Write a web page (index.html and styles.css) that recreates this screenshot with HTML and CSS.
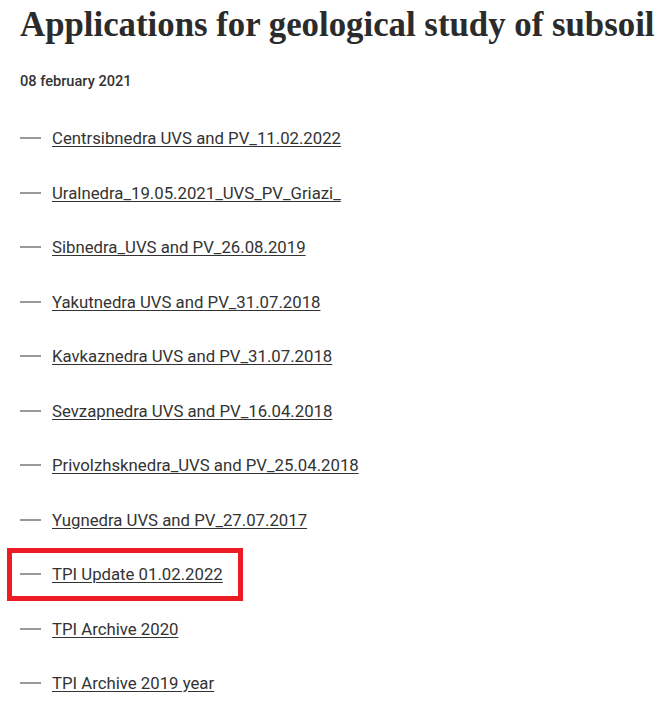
FILE: index.html
```html
<!DOCTYPE html>
<html lang="en">
<head>
<meta charset="utf-8">
<title>Applications for geological study of subsoil</title>
<link rel="stylesheet" href="styles.css">
</head>
<body>
<main class="page">
  <h1 class="title">Applications for geological study of subsoil</h1>
  <div class="date">08 february 2021</div>
  <ul class="docs">
    <li class="doc"><span class="dash"></span><a href="#">Centrsibnedra UVS and PV_11.02.2022</a></li>
    <li class="doc"><span class="dash"></span><a href="#">Uralnedra_19.05.2021_UVS_PV_Griazi_</a></li>
    <li class="doc"><span class="dash"></span><a href="#">Sibnedra_UVS and PV_26.08.2019</a></li>
    <li class="doc"><span class="dash"></span><a href="#">Yakutnedra UVS and PV_31.07.2018</a></li>
    <li class="doc"><span class="dash"></span><a href="#">Kavkaznedra UVS and PV_31.07.2018</a></li>
    <li class="doc"><span class="dash"></span><a href="#">Sevzapnedra UVS and PV_16.04.2018</a></li>
    <li class="doc"><span class="dash"></span><a href="#">Privolzhsknedra_UVS and PV_25.04.2018</a></li>
    <li class="doc"><span class="dash"></span><a href="#">Yugnedra UVS and PV_27.07.2017</a></li>
    <li class="doc doc-marked"><span class="dash"></span><a href="#">TPI Update 01.02.2022</a></li>
    <li class="doc"><span class="dash"></span><a href="#">TPI Archive 2020</a></li>
    <li class="doc"><span class="dash"></span><a href="#">TPI Archive 2019 year</a></li>
  </ul>
</main>
</body>
</html>
```
FILE: styles.css
```css
* { box-sizing: border-box; }
html, body { margin: 0; padding: 0; background: #fff; }
body { font-family: Roboto, "Liberation Sans", sans-serif; color: #333; }
.page { padding: 0 0 0 20px; }
.title {
  margin: 0;
  padding-top: 3px;
  font-family: "Liberation Serif", "DejaVu Serif", serif;
  font-weight: 700;
  font-size: 34.8px;
  line-height: 44px;
  color: #2b2b2b;
  white-space: nowrap;
}
.date {
  margin-top: 24px;
  font-size: 14.6px;
  font-weight: 500;
  line-height: 20px;
  color: #333;
}
.docs {
  list-style: none;
  margin: 20px 0 0 0;
  padding: 0;
}
.doc {
  display: flex;
  align-items: center;
  height: 54.5px;
  font-size: 16.75px;
}
.dash {
  width: 21px;
  height: 2px;
  background: #999;
  margin-right: 11px;
  flex: none;
}
.doc a {
  color: #333;
  text-decoration: underline;
  text-underline-offset: 2px;
}
.doc-marked {
  width: 236px;
  height: 53px;
  margin: 0.75px 0 0.75px -13px;
  padding-left: 8px;
  border: 5px solid #ed1c24;
}
```
